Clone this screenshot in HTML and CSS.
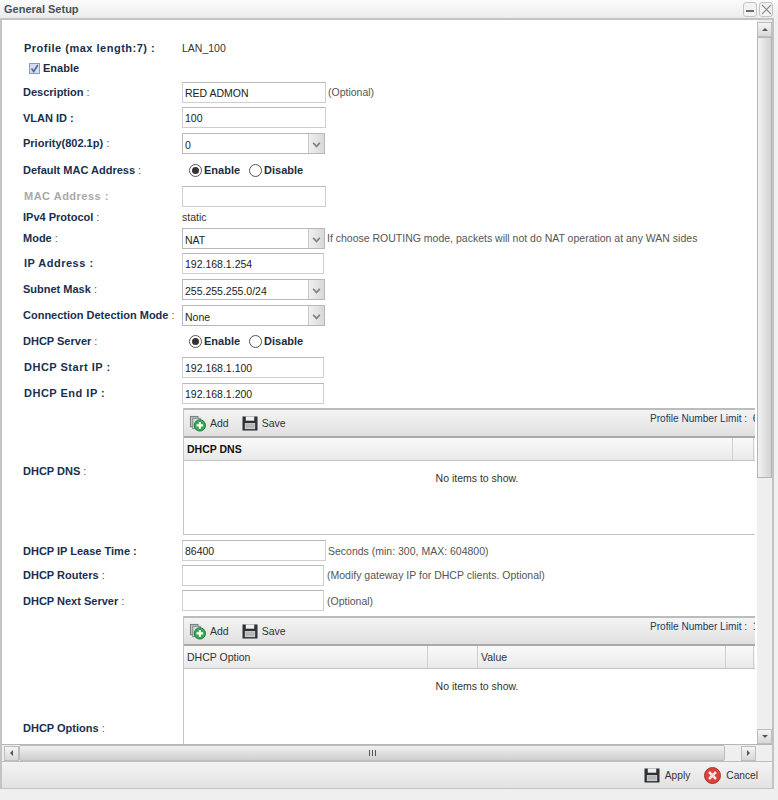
FILE: index.html
```html
<!DOCTYPE html>
<html lang="en">
<head>
<meta charset="utf-8">
<title>General Setup</title>
<link rel="stylesheet" href="styles.css">
</head>
<body>
<svg class="defs" width="0" height="0" aria-hidden="true">
  <defs>
    <symbol id="i-add" viewBox="0 0 18 18">
      <rect x="1.5" y="1.5" width="8" height="11" fill="#b9c2c4" stroke="#6f7a7c"/>
      <rect x="4" y="3.5" width="8" height="11" fill="#d8dddd" stroke="#7d8789"/>
      <circle cx="11.5" cy="11" r="6" fill="#35a94e" stroke="#23793a"/>
      <path d="M11.5 7.5v7M8 11h7" stroke="#fff" stroke-width="2.2"/>
    </symbol>
    <symbol id="i-save" viewBox="0 0 17 16">
      <path d="M.5 .5h16v15H.5z" fill="#2f3133"/>
      <rect x="4" y=".5" width="9" height="4.5" fill="#f0f0f0"/>
      <rect x="3" y="7.5" width="11" height="6.5" fill="#c9c9c9"/>
      <path d="M4 9.5h9M4 11.5h9" stroke="#a5a5a5"/>
    </symbol>
    <symbol id="i-cancel" viewBox="0 0 17 17">
      <circle cx="8.5" cy="8.5" r="8" fill="#d8413c" stroke="#a93431"/>
      <path d="M5 5l7 7M12 5l-7 7" stroke="#f6e3e0" stroke-width="2.6"/>
    </symbol>
  </defs>
</svg>
<div class="window">
  <header class="titlebar">
    <span class="title">General Setup</span>
    <span class="winbtns">
      <span class="winbtn"><span class="min"></span></span>
      <span class="winbtn"><svg width="11" height="11" viewBox="0 0 11 11"><path d="M1 1l9 9M10 1l-9 9" stroke="#8a8e92" stroke-width="1.1"/></svg></span>
    </span>
  </header>
  <div class="frame">
    <div class="main">
      <div class="viewport">
        <div class="form">
          <div class="row h19"><label class="lab wide">Profile (max length:7) :</label><span class="val">LAN_100</span></div>
          <div class="row h22 check-row"><span class="checkbox"><svg width="9" height="9" viewBox="0 0 9 9"><path d="M1.5 4.5l2.2 3L7.8 1" fill="none" stroke="#4a68a8" stroke-width="1.6"/></svg></span><span class="lab-inline">Enable</span></div>
          <div class="row h26"><label class="lab">Description <i>:</i></label><span class="input w144">RED ADMON</span><span class="note">(Optional)</span></div>
          <div class="row h25"><label class="lab">VLAN ID :</label><span class="input w144">100</span></div>
          <div class="row h26"><label class="lab">Priority(802.1p) <i>:</i></label><span class="select"><span class="sel-val">0</span><span class="arrow"></span></span></div>
          <div class="row h28"><label class="lab">Default MAC Address <i>:</i></label><span class="radios"><span class="radio on"></span><span class="lab-inline">Enable</span><span class="radio"></span><span class="lab-inline">Disable</span></span></div>
          <div class="row h24"><label class="lab wide muted">MAC Address :</label><span class="input w144"></span></div>
          <div class="row h18"><label class="lab">IPv4 Protocol <i>:</i></label><span class="val">static</span></div>
          <div class="row h24"><label class="lab">Mode <i>:</i></label><span class="select"><span class="sel-val">NAT</span><span class="arrow"></span></span><span class="note">If choose ROUTING mode, packets will not do NAT operation at any WAN sides</span></div>
          <div class="row h26"><label class="lab wide">IP Address :</label><span class="input w142">192.168.1.254</span></div>
          <div class="row h26"><label class="lab">Subnet Mask <i>:</i></label><span class="select"><span class="sel-val">255.255.255.0/24</span><span class="arrow"></span></span></div>
          <div class="row h26"><label class="lab">Connection Detection Mode <i>:</i></label><span class="select"><span class="sel-val">None</span><span class="arrow"></span></span></div>
          <div class="row h26"><label class="lab">DHCP Server <i>:</i></label><span class="radios"><span class="radio on"></span><span class="lab-inline">Enable</span><span class="radio"></span><span class="lab-inline">Disable</span></span></div>
          <div class="row h26"><label class="lab wide">DHCP Start IP :</label><span class="input w142">192.168.1.100</span></div>
          <div class="row h26"><label class="lab wide">DHCP End IP :</label><span class="input w142">192.168.1.200</span></div>
          <div class="row g1-row">
            <label class="lab">DHCP DNS <i>:</i></label>
            <div class="grid g1">
              <div class="toolbar">
                <span class="tool"><svg class="ic-add"><use href="#i-add"/></svg>Add</span>
                <span class="tool"><svg class="ic-save"><use href="#i-save"/></svg>Save</span>
                <span class="limit">Profile Number Limit :&nbsp; 6</span>
              </div>
              <div class="thead">
                <span class="th strong c-dns">DHCP DNS</span><span class="th c-end"></span>
              </div>
              <div class="empty">No items to show.</div>
            </div>
          </div>
          <div class="row h23"><label class="lab">DHCP IP Lease Time :</label><span class="input w144">86400</span><span class="note">Seconds (min: 300, MAX: 604800)</span></div>
          <div class="row h26"><label class="lab">DHCP Routers <i>:</i></label><span class="input w142"></span><span class="note tight">(Modify gateway IP for DHCP clients. Optional)</span></div>
          <div class="row h25"><label class="lab">DHCP Next Server <i>:</i></label><span class="input w142"></span><span class="note tight">(Optional)</span></div>
          <div class="row g2-row">
            <label class="lab">DHCP Options <i>:</i></label>
            <div class="grid g2">
              <div class="toolbar">
                <span class="tool"><svg class="ic-add"><use href="#i-add"/></svg>Add</span>
                <span class="tool"><svg class="ic-save"><use href="#i-save"/></svg>Save</span>
                <span class="limit">Profile Number Limit :&nbsp; 1</span>
              </div>
              <div class="thead">
                <span class="th c-opt">DHCP Option</span><span class="th c-mid"></span><span class="th c-value">Value</span><span class="th c-end"></span>
              </div>
              <div class="empty">No items to show.</div>
            </div>
          </div>
        </div>
      </div>
      <div class="vscroll">
        <span class="sbtn"><span class="tri up"></span></span>
        <span class="vthumb"></span>
        <span class="vtrack"></span>
        <span class="sbtn"><span class="tri down"></span></span>
      </div>
    </div>
    <div class="hscroll">
      <span class="sbtn"><span class="tri left"></span></span>
      <span class="hthumb"><span class="grip"></span></span>
      <span class="htrack"></span>
      <span class="sbtn"><span class="tri right"></span></span>
      <span class="corner"></span>
    </div>
    <footer class="footer">
      <span class="fbtn"><svg class="ic-save"><use href="#i-save"/></svg>Apply</span>
      <span class="fbtn"><svg class="ic-cancel"><use href="#i-cancel"/></svg>Cancel</span>
    </footer>
  </div>
  <div class="bottom"></div>
</div>
</body>
</html>
```

FILE: styles.css
```css
* { box-sizing: border-box; }
html, body { margin: 0; padding: 0; }
body {
  width: 778px;
  height: 800px;
  overflow: hidden;
  background: #f0f0f0;
  font-family: "Liberation Sans", Arial, sans-serif;
  font-size: 11px;
  color: #333;
}
.defs { position: absolute; }
.window { width: 778px; height: 800px; display: flex; flex-direction: column; }

.titlebar {
  height: 18px;
  flex: none;
  display: flex;
  align-items: center;
  justify-content: space-between;
  padding: 0 5px 0 4px;
  background: linear-gradient(#fbfbfb, #ececec);
}
.title { font-size: 11px; font-weight: bold; color: #46525a; }
.winbtns { display: flex; gap: 2px; }
.winbtn {
  width: 14px;
  height: 15px;
  border: 1px solid #c4c4c4;
  border-radius: 3px;
  background: #f3f3f3;
  display: flex;
  align-items: center;
  justify-content: center;
}
.min { width: 8px; height: 2px; background: #6b6f73; margin-top: 3px; }

.frame {
  width: 774px;
  height: 771px;
  flex: none;
  display: flex;
  flex-direction: column;
  border: 2px solid #c3c3c3;
  background: #fff;
}
.main { flex: none; height: 724px; display: flex; }
.viewport { width: 755px; height: 724px; overflow: hidden; background: #fff; }
.form { width: 770px; padding: 18px 0 0 21px; }

.row { display: flex; align-items: center; }
.h18 { height: 18px; }
.h19 { height: 19px; }
.h22 { height: 22px; }
.h23 { height: 23px; }
.h24 { height: 24px; }
.h25 { height: 25px; }
.h26 { height: 26px; }
.h28 { height: 28px; }

.lab {
  width: 159px;
  flex: none;
  font-size: 11px;
  font-weight: bold;
  color: #17304f;
  white-space: nowrap;
}
.lab i { font-style: normal; font-weight: normal; color: #555; }
.wide { letter-spacing: 0.5px; padding-left: 1px; }
.muted { color: #a9a9a9; }
.lab-inline { font-size: 11px; font-weight: bold; color: #1d2c3c; }
.val { font-size: 10.5px; color: #333; }
.note { font-size: 10.5px; color: #555; margin-left: 2px; white-space: nowrap; }
.note.tight { margin-left: 3px; }

.check-row { padding-left: 6px; }
.checkbox {
  width: 11px;
  height: 11px;
  margin-right: 3px;
  border: 1px solid #8f9cae;
  background: #d5dcec;
  display: flex;
  align-items: center;
  justify-content: center;
}

.input {
  height: 21px;
  border: 1px solid #cfcfcf;
  border-top-color: #b9b9b9;
  background: #fff;
  padding: 1px 2px 0;
  font-size: 10.5px;
  line-height: 18px;
  color: #222;
}
.w144 { width: 144px; }
.w142 { width: 142px; }

.select {
  width: 143px;
  height: 21px;
  border: 1px solid #b8b8b8;
  background: #fff;
  display: flex;
  justify-content: space-between;
}
.sel-val { padding: 2px 2px 0; font-size: 10.5px; line-height: 18px; color: #222; }
.arrow {
  width: 16px;
  background: linear-gradient(90deg, #f0f0f0, #d8d8d8);
  border-left: 1px solid #c8c8c8;
  position: relative;
}
.arrow::after {
  content: "";
  position: absolute;
  left: 4px;
  top: 6px;
  width: 5px;
  height: 5px;
  border-right: 2px solid #7b8288;
  border-bottom: 2px solid #7b8288;
  transform: rotate(45deg) scale(.8);
}

.radios { display: flex; align-items: center; padding-left: 7px; }
.radio {
  width: 13px;
  height: 13px;
  border: 1px solid #555;
  border-radius: 50%;
  background: #fff;
  margin-right: 2px;
  display: flex;
  align-items: center;
  justify-content: center;
}
.radio.on::after { content: ""; width: 7px; height: 7px; border-radius: 50%; background: #333; }
.lab-inline + .radio { margin-left: 9px; }

.g1-row { height: 130px; margin-bottom: 3px; }
.g2-row { height: 224px; margin-top: 3px; }
.grid {
  width: 587px;
  flex: none;
  align-self: flex-start;
  margin-left: 1px;
  border-left: 1px solid #c4c4c4;
  border-bottom: 1px solid #c4c4c4;
  background: #fff;
}
.g1 { height: 127px; margin-top: 2px; }
.g2 { height: 226px; }
.toolbar {
  height: 30px;
  display: flex;
  align-items: center;
  padding-left: 5px;
  gap: 13px;
  border-top: 2px solid #bcbcbc;
  border-bottom: 2px solid #a9a9a9;
  background: linear-gradient(#f4f4f4, #e0e0e0);
  position: relative;
}
.tool { display: flex; align-items: center; gap: 4px; font-size: 10.5px; color: #333; }
.ic-add { width: 17px; height: 17px; }
.ic-save { width: 16px; height: 15px; }
.ic-cancel { width: 17px; height: 17px; }
.limit { position: absolute; left: 466px; top: 3px; font-size: 10.1px; color: #1d3a5f; white-space: nowrap; }
.thead {
  height: 23px;
  display: flex;
  border-bottom: 1px solid #c4c4c4;
  background: linear-gradient(#fafafa, #e9e9e9);
}
.th {
  height: 22px;
  line-height: 22px;
  padding-left: 3px;
  font-size: 10.5px;
  color: #333;
  border-right: 1px solid #d0d0d0;
}
.strong { font-weight: bold; color: #111; }
.c-dns { width: 549px; }
.c-end { width: 21px; }
.c-opt { width: 244px; }
.c-mid { width: 50px; }
.c-value { width: 248px; }
.c-value + .c-end { width: 28px; }
.empty { text-align: center; font-size: 10.5px; color: #333; padding-top: 11px; }

.vscroll {
  width: 15px;
  flex: none;
  margin-left: 2px;
  display: flex;
  flex-direction: column;
  background: #efefef;
  padding-top: 2px;
}
.sbtn {
  width: 15px;
  height: 15px;
  flex: none;
  border: 1px solid #bdbdbd;
  background: linear-gradient(#f4f4f4, #d8d8d8);
  display: flex;
  align-items: center;
  justify-content: center;
}
.tri { width: 0; height: 0; border: 3px solid transparent; }
.tri.up { border-bottom-color: #555; margin-top: -3px; }
.tri.down { border-top-color: #555; margin-top: 3px; }
.tri.left { border-right-color: #555; margin-left: -3px; }
.tri.right { border-left-color: #555; margin-left: 3px; }
.vthumb {
  height: 441px;
  flex: none;
  border: 1px solid #b5b5b5;
  background: linear-gradient(90deg, #f1f1f1, #d2d2d2);
}
.vtrack { flex: 1; }

.hscroll {
  height: 17px;
  flex: none;
  display: flex;
  align-items: center;
  background: #efefef;
  border-top: 1px solid #b5b5b5;
  padding-left: 2px;
}
.hthumb {
  width: 706px;
  height: 16px;
  flex: none;
  border: 1px solid #bdbdbd;
  border-radius: 2px;
  background: linear-gradient(#f0f0f0, #cfcfcf);
  display: flex;
  align-items: center;
  justify-content: center;
}
.grip { width: 7px; height: 6px; border-left: 1px solid #555; border-right: 1px solid #555; position: relative; }
.grip::after { content: ""; position: absolute; left: 2px; top: 0; width: 1px; height: 6px; background: #555; }
.htrack { flex: 1; }
.corner { width: 16px; flex: none; }

.footer {
  height: 27px;
  flex: none;
  display: flex;
  align-items: center;
  justify-content: flex-end;
  gap: 14px;
  padding-right: 14px;
  border-top: 1px solid #bdbdbd;
  background: linear-gradient(#f3f3f3, #e2e2e2);
}
.fbtn { display: flex; align-items: center; gap: 5px; font-size: 10.2px; color: #333; }
.bottom { flex: 1; background: #efefef; }
```
